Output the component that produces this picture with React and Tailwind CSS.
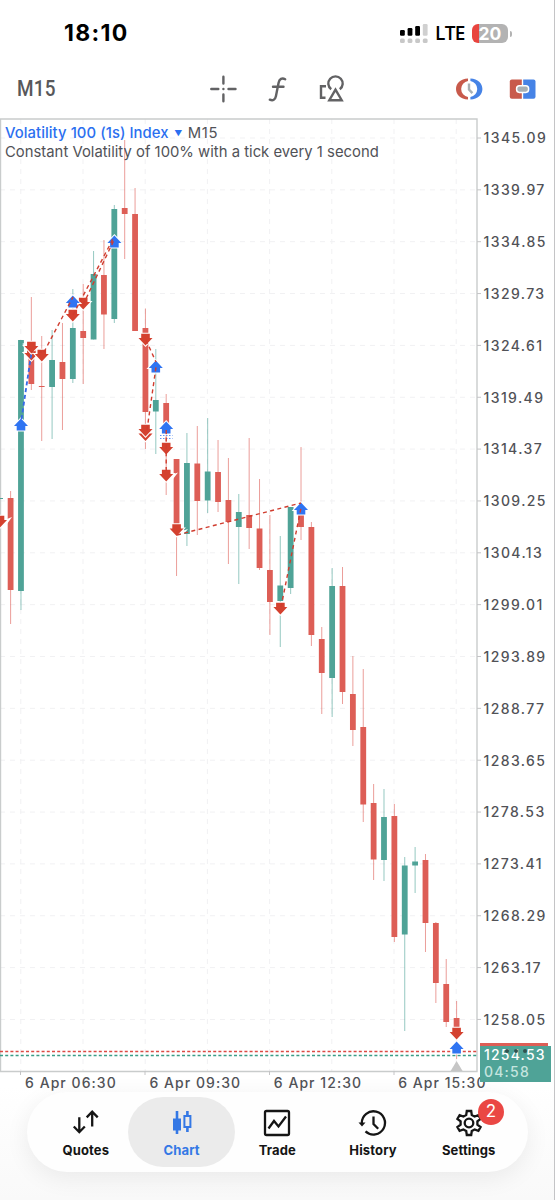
import React from "react";

const PRICES = [
  "1345.09", "1339.97", "1334.85", "1329.73", "1324.61", "1319.49", "1314.37", "1309.25", "1304.13",
  "1299.01", "1293.89", "1288.77", "1283.65", "1278.53", "1273.41", "1268.29", "1263.17", "1258.05",
];
const TIMES = ["6 Apr 06:30", "6 Apr 09:30", "6 Apr 12:30", "6 Apr 15:30"];

const GREEN = "#4fa397";
const RED = "#dd5e56";

// [up, high, body top, body bottom, low], y measured from the top of the chart
const CANDLES = [
  [0, 373, 380, 472, 506], [1, 222, 222, 473, 492], [0, 179, 224, 266, 272], [0, 218, 268, 269, 323],
  [1, 212, 242, 269, 321], [0, 205, 244, 261, 312], [1, 171, 210, 261, 265], [0, 166, 213, 220, 266],
  [1, 133, 156, 221.5, 221.5], [0, 122, 157, 196.5, 231], [1, 87, 91, 201, 205], [0, 22, 90, 96, 141],
  [0, 70, 96, 213, 213], [0, 190.5, 210, 294, 331], [1, 231, 282, 293.5, 336], [0, 276, 285, 310, 377],
  [0, 341, 341, 412, 458], [1, 315, 345, 416, 428], [0, 308, 345.5, 383, 417], [1, 300, 353.5, 382.5, 395],
  [0, 322, 354, 384, 394], [0, 340, 382, 404, 446], [1, 376, 394, 409, 466], [0, 320, 397, 410, 431],
  [0, 361, 410.5, 450, 452], [0, 397, 452, 484, 517], [1, 418, 467.5, 483, 529], [1, 389, 389, 470, 476],
  [0, 329, 397, 409, 422], [0, 404, 409, 517, 528], [0, 509, 521, 555, 596], [1, 450, 468, 560, 599],
  [0, 449, 468, 574, 586], [0, 538, 576, 612, 628], [0, 551, 609, 686.5, 704], [0, 666, 685, 741.5, 762],
  [1, 671, 699, 742, 763], [0, 686, 698, 819, 824], [1, 739, 747.5, 816.5, 913], [1, 729, 743.5, 747.5, 775],
  [0, 736, 742, 805, 834], [0, 804, 805, 865, 885], [0, 841, 866, 904, 909], [0, 883, 900, 911, 941],
];

// [x, y of the tip]
const UPS = [[21, 300.5], [72.8, 177.5], [114.4, 117.5], [155.8, 242.5], [166.2, 303.5], [301, 384.5], [456.6, 923.5]];
const DOWNS = [
  [0, 409.5], [31.4, 242.5], [31.4, 235.5], [41.8, 243.5], [72.8, 203.5], [83.2, 191.5], [145.5, 227.5],
  [145.5, 323], [145.5, 318.5], [166.2, 363.5], [166.2, 336.5], [176.6, 418], [280.4, 496.5], [456.6, 921.5],
];
const DEALS = [
  [73, 197, 114, 119], [83, 187, 114, 122], [44, 234, 73, 179], [31, 234, 42, 234],
  [146, 222, 156, 244], [147, 312, 156, 249], [177, 417, 301, 385], [281, 489, 301, 390], [166.2, 312, 166.2, 355],
];
const NOTCHES = ["22,226 28,223.5 28,229", "22,234.5 28,231.5 28,238", "12,399 7,401 7,406", "178,354.5 171,357 173,361", "188,411 182,413 182,418", "332,391 326,388.5 326,393"];

const xOf = (i) => 10.6 + i * 10.372;
const upPath = (x, y) => `M${x} ${y}l7 7.4h-2.7v4.6h-8.6v-4.6h-2.7z`;
const downPath = (x, y) => `M${x} ${y}l7 -7.4h-2.7v-4.4h-8.6v4.4h-2.7z`;

function StatusBar() {
  return (
    <div className="flex h-16 items-center pt-[3px]">
      <div className="ml-[64px] w-[335px] text-[23px] font-bold tracking-[1.3px] text-black">18:10</div>
      <svg className="h-5 w-[29px]" viewBox="0 0 29 20">
        {[0, 1, 2, 3].map((i) => (
          <g key={i}>
            <rect x={1 + i * 7.6} y={6 - i * 2} width="4.8" height={5.8 + i * 2} rx="1.2" fill={i === 3 ? "#d0d0d0" : "#000"} />
            <rect x={1 + i * 7.6} y="14.5" width="4.8" height="4.5" rx="1.5" fill="#c8c8c8" />
          </g>
        ))}
      </svg>
      <div className="ml-[7px] w-[37px] font-['Open_Sans'] text-[19px] font-semibold tracking-[-0.7px] text-black">LTE</div>
      <div className="flex h-[19px] w-9 items-center justify-center rounded-[6px] bg-[linear-gradient(90deg,#e8453f_20%,#b3b3b3_20%)] text-[17.5px] font-bold leading-[19px] text-white">20</div>
      <div className="ml-[1.5px] h-[6px] w-[2px] rounded-r bg-[#b3b3b3]" />
    </div>
  );
}

function Toolbar() {
  return (
    <div className="flex h-[50px] items-center">
      <div className="ml-[17px] w-[192px] origin-left scale-x-[0.88] font-[Roboto] text-[21.5px] font-medium tracking-[0.2px] text-[#58585a]">M15</div>
      <svg className="h-7 w-[138px]" viewBox="209 75 138 28" fill="none" stroke="#626264" strokeWidth="2.4" strokeLinecap="round" strokeLinejoin="miter">
        <path d="M223.4 76.8v6.7M223.4 94.5v6.7M211.3 89h7M228.5 89h7M223.4 89h.01" />
        <path d="M285.2 79.2c-3.2-1.6-5.8-.3-6.6 3.5l-2.7 13.5c-.7 3.5-2.9 4.9-6.1 3.5M273 86.7h10.5" />
        <path d="M326 86.3h-5v11.4h4.5" strokeLinecap="butt" />
        <path d="M331.2 89.3a7.2 7.2 0 1 1 8.6 0" strokeLinecap="butt" />
        <path d="M335.5 89.6l-6.2 10.6h12.4z" strokeLinecap="butt" />
      </svg>
      <svg className="ml-[108px] h-6 w-[28px]" viewBox="455 77.5 28 24">
        <path d="M468 79c-7.5.3-12 5-12 10.5s4.5 10.2 12 10.5v-2.5a8.1 8.1 0 0 1 0-16z" fill="#c85a4b" />
        <path d="M470.4 79c7.5.3 12 5 12 10.5s-4.5 10.2-12 10.5v-2.5a8.1 8.1 0 0 0 0-16z" fill="#4683e6" />
        <path d="M469 84v6l3.4 3.6" fill="none" stroke="#a8b0b4" strokeWidth="2.4" />
      </svg>
      <svg className="ml-[26px] h-6 w-[28px]" viewBox="509 77.5 28 24">
        <path d="M511.8 80h10v19.3h-10a2 2 0 0 1-2-2v-15.3a2 2 0 0 1 2-2z" fill="#c85a4b" />
        <path d="M523.2 80h10.3a2 2 0 0 1 2 2v15.3a2 2 0 0 1-2 2h-10.3z" fill="#4683e6" />
        <rect x="516.6" y="86.2" width="12" height="6.7" rx="2.8" fill="#a8b0b4" stroke="#fff" strokeWidth="1.5" />
      </svg>
    </div>
  );
}

function Plot() {
  return (
    <svg className="block h-[958px] w-[482px]" viewBox="0 0 482 958" fill="none">
      <g stroke="#f1f1f3" strokeDasharray="5 5">
        {PRICES.map((p, i) => <path key={p} d={`M0 ${20 + i * 51.85}H477`} />)}
        {[0, 1, 2, 3, 4, 5, 6, 7].map((i) => <path key={i} d={`M${20.8 + i * 62.2} 1V953`} />)}
      </g>
      <path d="M.5 953.5V1H477V953.5H0" stroke="#c9cccc" strokeWidth="1.4" />
      <g stroke="#c4c4c6">
        {PRICES.map((p, i) => <path key={p} d={`M477 ${20 + i * 51.85}h4`} />)}
        {TIMES.map((t, i) => <path key={t} d={`M${20.5 + i * 124.5} 953v4`} />)}
      </g>
      <path d="M0 380.5h3" stroke={GREEN} />
      {CANDLES.map(([up, high, top, bottom, low], i) => (
        <g key={i} fill={up ? GREEN : RED}>
          <rect x={xOf(i) - 0.5} y={high} width="1" height={low - high} opacity="0.6" />
          <rect x={xOf(i) - 2.9} y={top} width="5.8" height={bottom - top} />
        </g>
      ))}
      <path d="M0 933.5H477" stroke="#dc4a44" strokeWidth="1.4" strokeDasharray="3 2.2" />
      <path d="M0 937.5H477" stroke="#3a9c86" strokeWidth="1.4" strokeDasharray="3 2.2" />
      {NOTCHES.map((n) => <polygon key={n} points={n} fill="#fff" />)}
      <path d="M456.6 943l6 10h-12z" fill="#c6c6c6" />
      <g stroke="#fff" strokeWidth="2" paintOrder="stroke">
        {DOWNS.map(([x, y]) => <path key={`${x}-${y}`} d={downPath(x, y)} fill="#d4412f" />)}
        {UPS.map(([x, y]) => <path key={x} d={upPath(x, y)} fill="#2f74f2" />)}
      </g>
      <path d="M160 317.5h12.5M160 320.5h12.5" stroke="#5f92f4" strokeDasharray="1.5 1.5" />
      <g stroke="#d03c2e" strokeWidth="1.4" strokeDasharray="4 3.4">
        {DEALS.map((d) => <path key={d.join()} d={`M${d[0]} ${d[1]}L${d[2]} ${d[3]}`} />)}
      </g>
      <path d="M21.5 301L31.4 235" stroke="#3568e8" strokeWidth="1.8" strokeDasharray="4 2.8" />
    </svg>
  );
}

function QuoteTag() {
  return (
    <div className="absolute left-[480px] top-[925px] w-[71px]">
      <div className="h-[3px] w-[68px] bg-[#dd5e56]" />
      <div className="h-9 bg-[#4fa397] pl-1 text-[14px] font-medium leading-[17px] tracking-[1.2px]">
        <div className="text-white">1254.53</div>
        <div className="text-[#c5e5df]">04:58</div>
      </div>
      <div className="absolute left-[25px] top-[6px] flex gap-[5px]">
        <span className="h-1 w-1 rounded-full bg-[#31524f]" />
        <span className="h-1 w-1 rounded-full bg-[#31524f]" />
        <span className="h-1 w-1 rounded-full bg-[#31524f]" />
      </div>
    </div>
  );
}

function Chart() {
  return (
    <div className="relative h-[974px]">
      <div className="flex">
        <Plot />
        <div className="-mt-[6px] flex flex-col pl-[1.5px]">
          {PRICES.map((p) => (
            <div key={p} className="flex h-[51.85px] items-center text-[14px] font-medium tracking-[1.4px] text-[#515257]">{p}</div>
          ))}
        </div>
      </div>
      <div className="-mt-px flex pl-[25px] text-[14px] font-medium leading-4 tracking-[1.05px] text-[#515257]">
        {TIMES.map((t) => <div key={t} className="w-[124.4px] shrink-0 whitespace-nowrap">{t}</div>)}
      </div>
      <div className="absolute left-[5px] top-[6px] text-[14.85px] leading-[19px] text-[#515257]">
        <div className="flex items-center">
          <span className="font-medium tracking-[0.06px] text-[#2b6ff0]">Volatility 100 (1s) Index</span>
          <span className="mx-[5.5px] text-[8px] text-[#2b6ff0]">▼</span>
          <span className="tracking-[0.6px]">M15</span>
        </div>
        <div>Constant Volatility of 100% with a tick every 1 second</div>
      </div>
      <QuoteTag />
    </div>
  );
}

const ICONS = {
  Quotes: <path d="M7.3 8.2v14.8M1.8 17.5l5.5 5.7 5.5-5.7M20.2 17.5V2.7M14.7 8.4l5.5-5.7 5.5 5.7" />,
  Chart: (
    <g strokeWidth="2.6">
      <path d="M9 2v23M19.4 2v4M19.4 19v4" />
      <path d="M5 9.5h8v12H5z" fill="currentColor" stroke="none" />
      <path d="M16.4 7h6v11h-6z" strokeWidth="2" />
    </g>
  ),
  Trade: <><rect x="2" y="2" width="24" height="24" rx="1.5" /><path d="M5.5 19.5l5.5-7.5 4.5 5.5 7.5-10" /></>,
  History: <><path d="M2.8 14a11.6 11.6 0 1 1 3.7 8.4M14.5 7.5v7.5l4.7 4.7" /><path d="M-.5 13.5h7l-3.5 4z" fill="currentColor" stroke="none" /></>,
  Settings: (
    <>
      <path d="M11.8 2h4.4l.6 4 2.8 1.6 3.8-1.5 2.2 3.8-3.2 2.5v3.2l3.2 2.5-2.2 3.8-3.8-1.5-2.8 1.6-.6 4h-4.4l-.6-4-2.8-1.6-3.8 1.5-2.2-3.8 3.2-2.5v-3.2l-3.2-2.5 2.2-3.8 3.8 1.5 2.8-1.6z" />
      <circle cx="14" cy="14" r="4.3" />
    </>
  ),
};

function TabBar() {
  return (
    <nav className="ml-[27px] mr-[26px] flex h-20 rounded-full bg-[#fefefe] px-[11px] py-[5px] shadow-[0_6px_24px_rgba(0,0,0,0.07)]">
      {Object.keys(ICONS).map((name) => (
        <div key={name} className={`relative flex flex-col items-center rounded-full pt-3 ${name === "Chart" ? "-mx-[5.6px] w-[107px] bg-[#ebebeb] text-[#3478e5]" : "w-[95.7px] text-[#151515]"}`}>
          <svg className="h-7 w-7 overflow-visible" viewBox="0 0 28 28" fill="none" stroke="currentColor" strokeWidth="2.3">{ICONS[name]}</svg>
          <div className="mt-1 text-[13px] font-bold leading-[18px] tracking-[0.15px]">{name}</div>
          {name === "Settings" && (
            <span className="absolute left-[57px] top-[2px] flex h-[26px] w-[26px] items-center justify-center rounded-full bg-[#ea4744] text-[17px] text-white">2</span>
          )}
        </div>
      ))}
    </nav>
  );
}

export default function App() {
  return (
    <div className="h-[1200px] w-[555px] overflow-hidden border-r border-[#c4c4c6] bg-[linear-gradient(#fff_1085px,#f9f9f9_1200px)] font-[Inter,sans-serif]">
      <StatusBar />
      <Toolbar />
      <div className="h-1" />
      <Chart />
      <TabBar />
    </div>
  );
}
